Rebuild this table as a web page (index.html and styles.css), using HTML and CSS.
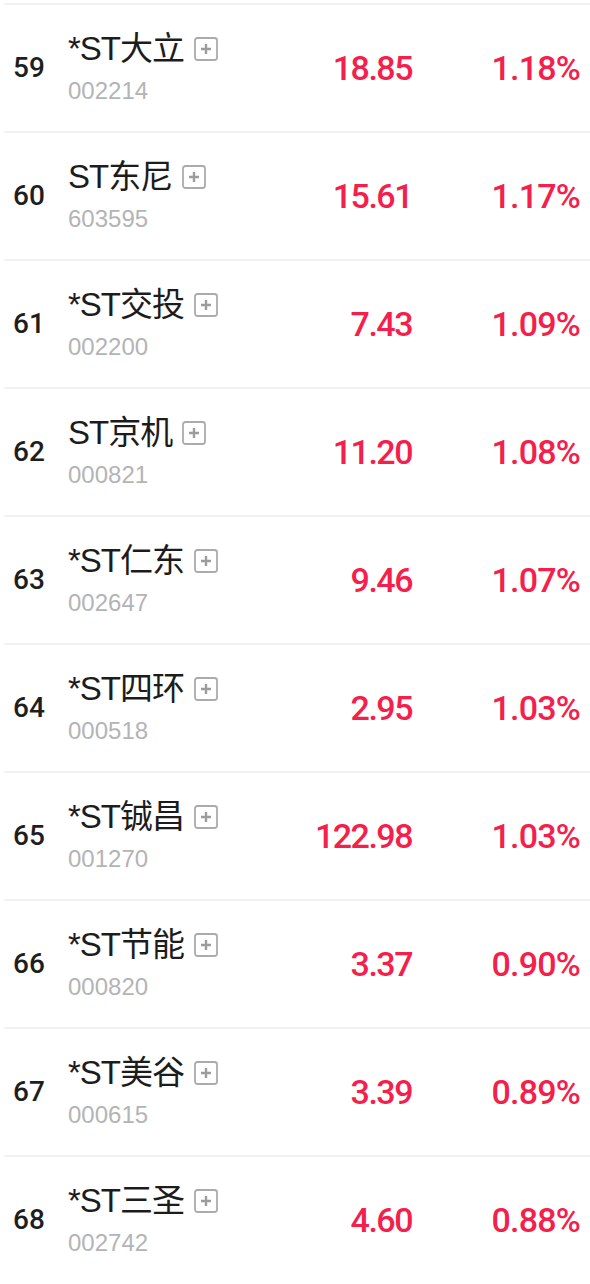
FILE: index.html
```html
<!DOCTYPE html>
<html lang="zh-CN">
<head>
<meta charset="utf-8">
<title>ST 排行</title>
<link rel="stylesheet" href="styles.css">
</head>
<body>
<div class="list">
  <div class="row"><div class="rank">59</div><div class="info"><div class="name">*ST大立<svg class="add" viewBox="0 0 24 24"><rect x="1" y="1" width="22" height="22" rx="2.5"/><path d="M7 12h10M12 7v10"/></svg></div><div class="code">002214</div></div><div class="price">18.85</div><div class="pct">1.18%</div></div>
  <div class="row"><div class="rank">60</div><div class="info"><div class="name">ST东尼<svg class="add" viewBox="0 0 24 24"><rect x="1" y="1" width="22" height="22" rx="2.5"/><path d="M7 12h10M12 7v10"/></svg></div><div class="code">603595</div></div><div class="price">15.61</div><div class="pct">1.17%</div></div>
  <div class="row"><div class="rank">61</div><div class="info"><div class="name">*ST交投<svg class="add" viewBox="0 0 24 24"><rect x="1" y="1" width="22" height="22" rx="2.5"/><path d="M7 12h10M12 7v10"/></svg></div><div class="code">002200</div></div><div class="price">7.43</div><div class="pct">1.09%</div></div>
  <div class="row"><div class="rank">62</div><div class="info"><div class="name">ST京机<svg class="add" viewBox="0 0 24 24"><rect x="1" y="1" width="22" height="22" rx="2.5"/><path d="M7 12h10M12 7v10"/></svg></div><div class="code">000821</div></div><div class="price">11.20</div><div class="pct">1.08%</div></div>
  <div class="row"><div class="rank">63</div><div class="info"><div class="name">*ST仁东<svg class="add" viewBox="0 0 24 24"><rect x="1" y="1" width="22" height="22" rx="2.5"/><path d="M7 12h10M12 7v10"/></svg></div><div class="code">002647</div></div><div class="price">9.46</div><div class="pct">1.07%</div></div>
  <div class="row"><div class="rank">64</div><div class="info"><div class="name">*ST四环<svg class="add" viewBox="0 0 24 24"><rect x="1" y="1" width="22" height="22" rx="2.5"/><path d="M7 12h10M12 7v10"/></svg></div><div class="code">000518</div></div><div class="price">2.95</div><div class="pct">1.03%</div></div>
  <div class="row"><div class="rank">65</div><div class="info"><div class="name">*ST铖昌<svg class="add" viewBox="0 0 24 24"><rect x="1" y="1" width="22" height="22" rx="2.5"/><path d="M7 12h10M12 7v10"/></svg></div><div class="code">001270</div></div><div class="price">122.98</div><div class="pct">1.03%</div></div>
  <div class="row"><div class="rank">66</div><div class="info"><div class="name">*ST节能<svg class="add" viewBox="0 0 24 24"><rect x="1" y="1" width="22" height="22" rx="2.5"/><path d="M7 12h10M12 7v10"/></svg></div><div class="code">000820</div></div><div class="price">3.37</div><div class="pct">0.90%</div></div>
  <div class="row"><div class="rank">67</div><div class="info"><div class="name">*ST美谷<svg class="add" viewBox="0 0 24 24"><rect x="1" y="1" width="22" height="22" rx="2.5"/><path d="M7 12h10M12 7v10"/></svg></div><div class="code">000615</div></div><div class="price">3.39</div><div class="pct">0.89%</div></div>
  <div class="row"><div class="rank">68</div><div class="info"><div class="name">*ST三圣<svg class="add" viewBox="0 0 24 24"><rect x="1" y="1" width="22" height="22" rx="2.5"/><path d="M7 12h10M12 7v10"/></svg></div><div class="code">002742</div></div><div class="price">4.60</div><div class="pct">0.88%</div></div>
</div>
</body>
</html>
```

FILE: styles.css
```css
html, body {
  margin: 0;
  padding: 0;
  background: #ffffff;
}
body {
  width: 590px;
  overflow: hidden;
  font-family: "Liberation Sans", "Noto Sans CJK SC", sans-serif;
}
.list {
  padding-top: 3px;
  padding-left: 4px;
}
.row {
  display: flex;
  align-items: center;
  height: 126px;
  border-top: 2px solid #f2f2f2;
}
.rank {
  width: 55px;
  padding-left: 9px;
  font-family: Roboto, "Liberation Sans", sans-serif;
  font-weight: 500;
  font-size: 28px;
  line-height: 28px;
  color: #1e1e1e;
}
.info {
  flex: 1;
  display: flex;
  flex-direction: column;
}
.name {
  font-size: 33px;
  line-height: 36px;
  height: 36px;
  letter-spacing: -1px;
  color: #1c1c1c;
  white-space: nowrap;
}
.add {
  width: 24px;
  height: 24px;
  margin-left: 10px;
  vertical-align: middle;
  position: relative;
  top: -2px;
}
.add rect {
  fill: none;
  stroke: #ababab;
  stroke-width: 1.8;
}
.add path {
  fill: none;
  stroke: #9c9c9c;
  stroke-width: 2.4;
}
.code {
  margin-top: 10px;
  font-size: 24px;
  line-height: 28px;
  color: #b4b4b4;
}
.price, .pct {
  font-family: Roboto, "Liberation Sans", sans-serif;
  font-weight: 500;
  font-size: 34px;
  line-height: 34px;
  letter-spacing: -1.5px;
  color: #f4204b;
  text-align: right;
}
.price {
  width: 150px;
  margin-right: -2px;
}
.pct {
  width: 170px;
  margin-right: 10px;
  letter-spacing: -0.8px;
}
```
